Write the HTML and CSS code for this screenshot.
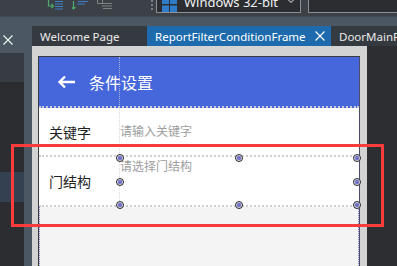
FILE: index.html
```html
<!DOCTYPE html>
<html lang="zh-CN">
<head>
<meta charset="utf-8">
<title>ReportFilterConditionFrame</title>
<link rel="stylesheet" href="styles.css">
</head>
<body>
<div class="app">
  <div class="toolbar">
    <svg class="tb-icon" width="17" height="11" viewBox="0 0 17 11">
      <path d="M1.5 0 V6 H6" fill="none" stroke="#4fae6e" stroke-width="1.2"/>
      <path d="M4.5 4 L6.5 6 L4.5 8" fill="none" stroke="#4fae6e" stroke-width="1.2"/>
      <path d="M8 1.5 H16 M8 4 H16 M8 6.5 H16 M8 9 H16" stroke="#3d7fc8" stroke-width="1"/>
    </svg>
    <svg class="tb-icon" width="17" height="11" viewBox="0 0 17 11">
      <path d="M1.5 1 V9" fill="none" stroke="#4fae6e" stroke-width="1.2"/>
      <path d="M-0.5 7 L1.5 9 L3.5 7" fill="none" stroke="#4fae6e" stroke-width="1.2"/>
      <path d="M6 1.5 H16 M5 4 H13" stroke="#3d7fc8" stroke-width="1"/>
    </svg>
    <svg class="tb-icon" width="16" height="11" viewBox="0 0 16 11">
      <path d="M0.5 0 V3.5 H5.5 V0" fill="none" stroke="#7d8286" stroke-width="1"/>
      <path d="M5 3.5 H15 M5 6 H15 M6 8.5 H15" stroke="#7d8286" stroke-width="1"/>
    </svg>
    <span class="sep"></span>
    <div class="combo combo-platform">
      <svg class="winlogo" width="15" height="14" viewBox="0 0 15 14">
        <rect x="0" y="0" width="7" height="6" fill="#2f7cc9"/>
        <rect x="8" y="0" width="7" height="6" fill="#2f7cc9"/>
        <rect x="0" y="7.5" width="7" height="6.5" fill="#2f7cc9"/>
        <rect x="8" y="7.5" width="7" height="6.5" fill="#2f7cc9"/>
      </svg>
      <span class="combo-text">Windows 32-bit</span>
      <svg class="chev" width="10" height="6" viewBox="0 0 10 6">
        <path d="M1 0.5 L5 4.5 L9 0.5" fill="none" stroke="#9aa0a5" stroke-width="1.2"/>
      </svg>
    </div>
    <div class="combo combo-wide"></div>
  </div>

  <div class="workspace">
    <aside class="leftpanel">
      <div class="lp-top">
        <svg class="lp-close" width="10" height="10" viewBox="0 0 10 10">
          <path d="M0.5 0.5 L9.5 9.5 M9.5 0.5 L0.5 9.5" stroke="#f2f2f2" stroke-width="1.1"/>
        </svg>
      </div>
      <div class="lp-head"></div>
      <div class="lp-body"><div class="lp-sel"></div></div>
    </aside>

    <section class="editor">
      <nav class="tabs">
        <div class="tab tab-welcome">Welcome Page</div>
        <div class="tab tab-active">ReportFilterConditionFrame
          <svg class="tab-close" width="10" height="10" viewBox="0 0 10 10">
            <path d="M0.5 0.5 L9.5 9.5 M9.5 0.5 L0.5 9.5" stroke="#ffffff" stroke-width="1.1"/>
          </svg>
        </div>
        <div class="tab tab-door">DoorMainFrame</div>
      </nav>
      <div class="editor-body">
        <div class="canvas">
          <div class="phone">
            <header class="appbar">
              <svg class="back" width="19" height="14" viewBox="0 0 19 14">
                <path d="M18 7 H2.5 M8 1.5 L2.5 7 L8 12.5" fill="none" stroke="#ffffff" stroke-width="2.4"/>
              </svg>
              <span class="appbar-title">条件设置</span>
            </header>
            <div class="row">
              <span class="label">关键字</span>
              <span class="ph">请输入关键字</span>
            </div>
            <div class="row row-select">
              <span class="label">门结构</span>
              <span class="ph ph-top">请选择门结构</span>
              <span class="handle h-tl"></span>
              <span class="handle h-tm"></span>
              <span class="handle h-tr"></span>
              <span class="handle h-ml"></span>
              <span class="handle h-mr"></span>
              <span class="handle h-bl"></span>
              <span class="handle h-bm"></span>
              <span class="handle h-br"></span>
            </div>
            <div class="rest"></div>
            <div class="guide"></div>
          </div>
        </div>
        <div class="rightpanel"></div>
      </div>
    </section>
  </div>

  <div class="redbox"></div>
</div>
</body>
</html>
```

FILE: styles.css
```css
* { box-sizing: border-box; }

html, body {
  margin: 0;
  padding: 0;
  width: 397px;
  height: 266px;
  overflow: hidden;
  background: #4b5762;
}

.app {
  position: relative;
  width: 397px;
  height: 266px;
  overflow: hidden;
  font-family: "Noto Sans", "Liberation Sans", sans-serif;
}

/* ---------- toolbar ---------- */
.toolbar {
  height: 17px;
  background: #3b4146;
  border-bottom: 1px solid #434b52;
  display: flex;
  align-items: flex-start;
  padding-left: 47px;
}

.tb-icon { display: block; flex: none; }
.tb-icon + .tb-icon { margin-left: 8px; }

.sep {
  width: 2px;
  height: 10px;
  margin-left: 38px;
  background: repeating-linear-gradient(to bottom, #7a7f84 0 2px, transparent 2px 4px);
}

.combo {
  height: 24px;
  margin-top: -11px;
  border: 1px solid #8a9095;
  background: #2b2d31;
  display: flex;
  align-items: flex-end;
  padding-bottom: 0;
}

.combo-platform {
  width: 145px;
  margin-left: 3px;
  padding-left: 5px;
}

.winlogo { display: block; flex: none; }

.combo-text {
  margin-left: 7px;
  margin-bottom: 3px;
  font-size: 13px;
  line-height: 13px;
  color: #f0f0f0;
  white-space: nowrap;
}

.chev {
  display: block;
  margin-left: auto;
  margin-right: 4px;
  margin-bottom: 8px;
}

.combo-wide {
  flex: 1;
  margin-left: 7px;
  border-right: none;
}

/* ---------- workspace ---------- */
.workspace {
  display: flex;
  height: 249px;
}

.leftpanel {
  width: 24px;
  flex: none;
  display: flex;
  flex-direction: column;
  margin-right: 8px;
}

.lp-top {
  height: 36px;
  padding: 18px 0 0 3px;
}
.lp-close { display: block; }

.lp-head {
  height: 29px;
  background: #363c42;
}

.lp-body {
  flex: 1;
  background: #2b2d31;
  padding-top: 90px;
}
.lp-sel {
  height: 30px;
  background: #334150;
}

.editor {
  flex: 1;
  display: flex;
  flex-direction: column;
  padding-top: 9px;
  min-width: 0;
}

.tabs {
  display: flex;
  height: 20px;
  white-space: nowrap;
  overflow: hidden;
}

.tab {
  flex: none;
  height: 20px;
  line-height: 19px;
  font-size: 11.5px;
  color: #eaeaea;
  background: #343a40;
  padding-left: 8px;
  display: flex;
  align-items: center;
}

.tab-welcome { width: 115px; }

.tab-active {
  width: 184px;
  background: #1d6bac;
  color: #ffffff;
}
.tab-close {
  display: block;
  margin-left: auto;
  margin-right: 6px;
}

.tab-door { flex: 1; overflow: hidden; }

.editor-body {
  flex: 1;
  display: flex;
  min-height: 0;
}

.canvas {
  width: 335px;
  flex: none;
  background: #d3d3d3;
  padding: 10px 0 0 6px;
  overflow: hidden;
}

.rightpanel {
  flex: 1;
  background: #2d2e32;
}

/* ---------- phone preview ---------- */
.phone {
  position: relative;
  width: 322px;
  height: 230px;
  border-top: 1px solid #3a3a3a;
  border-left: 1px solid #3a3a3a;
  border-right: 1px solid #4c4c6a;
  display: flex;
  flex-direction: column;
  font-family: "Noto Sans CJK SC", "Noto Sans", sans-serif;
}

.appbar {
  height: 51px;
  flex: none;
  background: #4666dc;
  border-bottom: 2px dotted #c9ccd8;
  display: flex;
  align-items: center;
  padding: 1px 0 0 18px;
}

.back { display: block; margin-right: 13px; }

.appbar-title {
  color: #ffffff;
  font-size: 16px;
  line-height: 20px;
}

.row {
  position: relative;
  flex: none;
  height: 49px;
  background: #ffffff;
  border-bottom: 2px dotted #cfcfcf;
  display: flex;
  align-items: center;
}

.row-select {
  height: 50px;
  align-items: stretch;
}

.label {
  width: 81px;
  padding-left: 10px;
  font-size: 14px;
  color: #1e1e1e;
  display: flex;
  align-items: center;
}

.ph {
  font-size: 12px;
  color: #9d9d9d;
  line-height: 16px;
  padding-bottom: 1px;
}

.ph-top {
  padding-top: 1px;
}

.handle {
  position: absolute;
  width: 8px;
  height: 8px;
  border-radius: 50%;
  border: 1px solid #262626;
  background: radial-gradient(circle, #7474c8 0 1.8px, #e4e4f2 2.6px);
  z-index: 2;
}
.h-tl { left: 77px;  top: -3px; }
.h-tm { left: 196px; top: -3px; }
.h-tr { left: 314px; top: -3px; }
.h-ml { left: 77px;  top: 21px; }
.h-mr { left: 314px; top: 21px; }
.h-bl { left: 77px;  top: 44px; }
.h-bm { left: 196px; top: 44px; }
.h-br { left: 314px; top: 44px; }

.rest {
  flex: 1;
  background: #f4f4f4;
  border-left: 1px dotted #8181cf;
  border-right: 1px dotted #8181cf;
  margin-left: 0;
}

.guide {
  position: absolute;
  left: 80px;
  top: 0;
  height: 150px;
  border-left: 1px dotted rgba(205, 205, 215, 0.75);
}

/* ---------- annotation ---------- */
.redbox {
  position: absolute;
  left: 11px;
  top: 144px;
  width: 373px;
  height: 83px;
  border: 3px solid #fb3b3c;
  pointer-events: none;
}
```
